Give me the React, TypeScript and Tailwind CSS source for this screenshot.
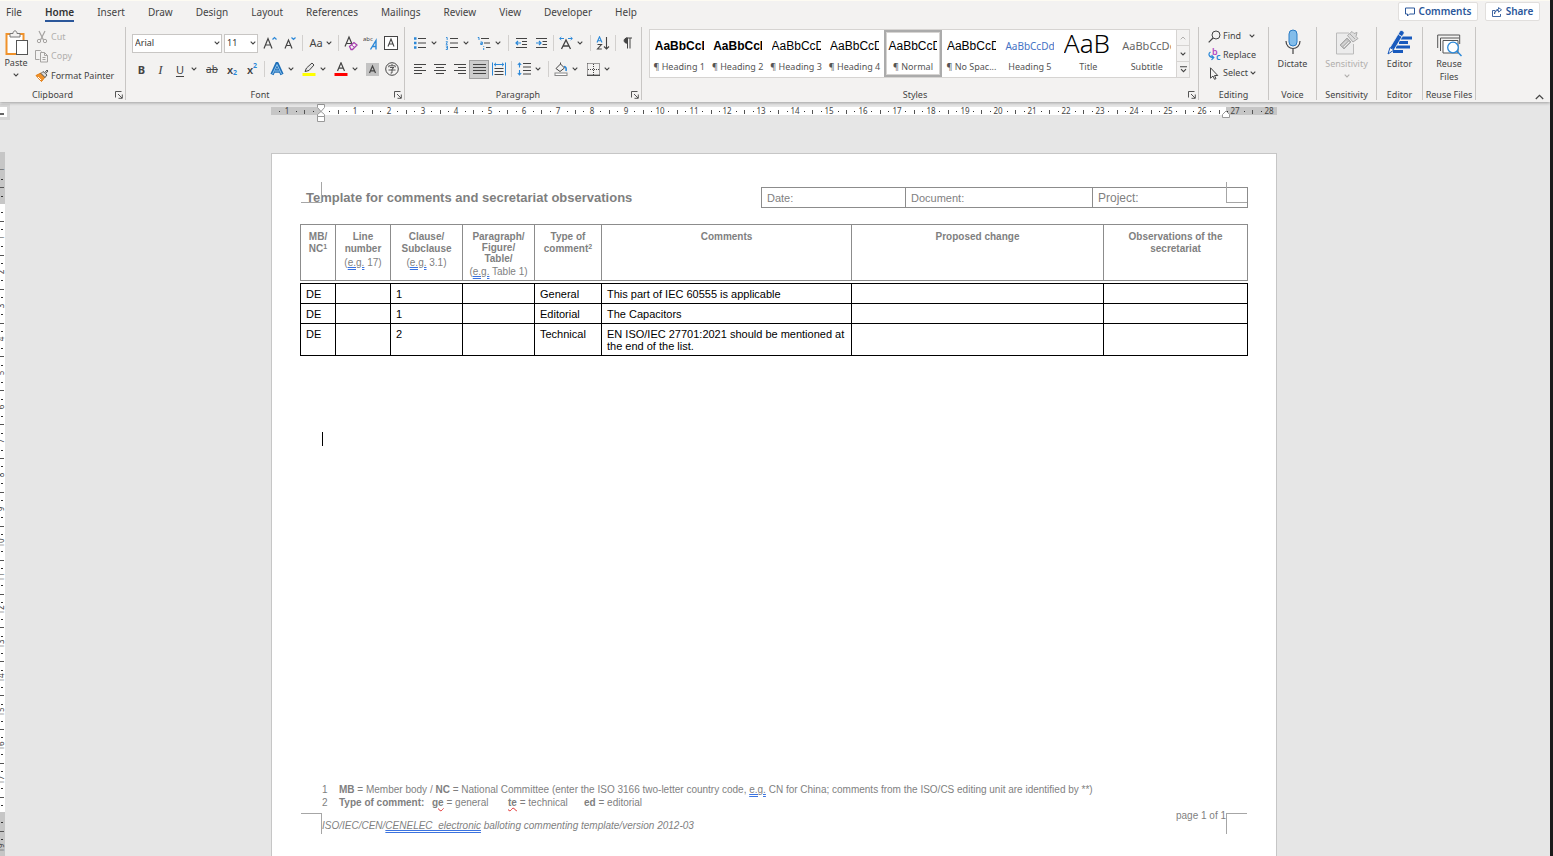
import React from "react";
import clsx from "clsx";

interface ChildrenProps {
  children?: React.ReactNode;
}

const BLUE = "#2b88d8";
const INK = "#444444";

const Icon = ({
  children,
  w = 16,
  h = 16,
}: ChildrenProps & { w?: number; h?: number }) => (
  <svg
    width={w}
    height={h}
    viewBox={`0 0 ${w} ${h}`}
    fill="none"
    stroke={INK}
    aria-hidden="true"
    className="shrink-0"
  >
    {children}
  </svg>
);

const Chevron = ({ color = INK }: { color?: string }) => (
  <Icon w={6} h={4}>
    <path d="M.7.7 3 3 5.3.7" stroke={color} strokeWidth="1.1" />
  </Icon>
);

/* ---------- small building blocks ---------- */

const Tool = ({
  label,
  children,
  active,
  narrow,
}: ChildrenProps & { label: string; active?: boolean; narrow?: boolean }) => (
  <button
    aria-label={label}
    className={clsx(
      "flex h-[19px] items-center justify-center",
      narrow ? "w-[19px]" : "w-5",
      active && "border border-[#a0a0a0] bg-[#cdcdcd]"
    )}
  >
    {children}
  </button>
);

const SplitTool = ({ label, children }: ChildrenProps & { label: string }) => (
  <div className="flex h-[19px] w-8 items-center">
    <button aria-label={label} className="flex w-5 justify-center">
      {children}
    </button>
    <button aria-label={`${label} options`} className="flex h-full w-2 items-center justify-center">
      <Chevron />
    </button>
  </div>
);

const Divider = () => <span className="mx-[2px] h-4 w-px bg-[#d2d0ce]" />;

const Launcher = ({ label }: { label: string }) => (
  <button aria-label={label} className="w-[10px]">
    <Icon w={8} h={8}>
      <path d="M.5 6.500V.5h6M3 3l4 4M7.300 3.500v3.800H3.500" strokeWidth=".9" />
    </Icon>
  </button>
);

const Group = ({
  title,
  className,
  launcher,
  children,
}: ChildrenProps & { title: string; className: string; launcher?: boolean }) => (
  <section
    aria-label={title}
    className={clsx("flex h-[73px] shrink-0 flex-col border-r border-[#c8c6c4]", className)}
  >
    <div className="flex-1">{children}</div>
    <div className="flex h-[10px] items-center leading-[10px]">
      <span className="flex-1 text-center whitespace-nowrap">{title}</span>
      {launcher && <Launcher label={`${title} settings`} />}
    </div>
  </section>
);

const Row = ({ children }: ChildrenProps) => <div className="flex h-[26px] items-center">{children}</div>;

const DropDown = ({
  label,
  options,
  className,
}: {
  label: string;
  options: string[];
  className: string;
}) => (
  <div className={clsx("relative h-[19px]", className)}>
    <select
      aria-label={label}
      className="h-full w-full appearance-none border border-[#c8c6c4] bg-white px-[2px] text-[9px] text-[#333]"
    >
      {options.map((o) => (
        <option key={o}>{o}</option>
      ))}
    </select>
    <span className="pointer-events-none absolute top-[7px] right-[2px]">
      <Chevron />
    </span>
  </div>
);

const BigButton = ({
  icon,
  children,
  disabled,
  arrow,
}: ChildrenProps & { icon: React.ReactNode; disabled?: boolean; arrow?: boolean }) => (
  <button
    disabled={disabled}
    className={clsx(
      "flex w-full flex-col items-center text-center leading-[13px]",
      disabled && "text-[#b1afad]"
    )}
  >
    <span className="flex h-[30px] items-center">{icon}</span>
    {children}
    {arrow && (
      <span className="mt-1">
        <Chevron color={disabled ? "#b1afad" : INK} />
      </span>
    )}
  </button>
);

/* ---------- ribbon ---------- */

const tabs = [
  "File",
  "Home",
  "Insert",
  "Draw",
  "Design",
  "Layout",
  "References",
  "Mailings",
  "Review",
  "View",
  "Developer",
  "Help",
];

const TabRow = () => (
  <div className="flex h-[26px] items-start justify-between pr-[10px] pl-[6px]">
    <nav className="flex gap-[23px] text-[10px]">
      {tabs.map((tab) => (
        <a
          key={tab}
          href={`#${tab.toLowerCase()}`}
          className={clsx(
            "flex h-[21px] items-center border-b-2 pt-[3px]",
            tab === "Home" ? "border-[#2b579a] font-semibold text-[#333]" : "border-transparent"
          )}
        >
          {tab}
        </a>
      ))}
    </nav>
    <div className="flex gap-[7px] pt-[1px] text-[10px] font-semibold text-[#2b579a]">
      <button className="flex h-[19px] w-[80px] items-center justify-center gap-1 rounded-[2px] border border-[#e1dfdd] bg-white">
        <Icon w={10} h={10}>
          <path d="M.5 1h9v6H4.500L2.500 9V7h-2z" stroke="#2b579a" />
        </Icon>
        Comments
      </button>
      <button className="flex h-[19px] w-[55px] items-center justify-center gap-1 rounded-[2px] border border-[#e1dfdd] bg-white">
        <Icon w={10} h={10}>
          <path d="M3 3.500H.5v6h8V7M2.500 7c.3-2.500 1.500-3.600 4-3.600V5.200L9.500 2.800 6.500.6v1.700C4 2.500 2.600 4.300 2.500 7z" stroke="#2b579a" strokeWidth=".9" />
        </Icon>
        Share
      </button>
    </div>
  </div>
);

const ClipboardGroup = () => (
  <Group title="Clipboard" className="w-[126px] [&>div:last-child>span]:pr-[10px]" launcher>
    <div className="flex">
      <button className="flex w-[32px] flex-col items-center pt-[3px] leading-[13px]">
        <Icon w={23} h={26}>
          <rect x="1.500" y="4" width="17" height="20" fill="#fff" stroke="#f0922b" strokeWidth="2" />
          <path d="M5 7V3.500h3C8 0 12 0 12 3.500h3V7z" fill="#f3f2f1" stroke="#777" />
          <rect x="11.500" y="10.500" width="11" height="14" fill="#fff" stroke="#555" />
        </Icon>
        <span>Paste</span>
        <span className="mt-1">
          <Chevron />
        </span>
      </button>
      <div className="flex flex-col pl-[3px]">
        <button disabled className="flex h-[19px] items-center gap-[2px] text-[#b1afad]">
          <Icon w={14} h={14}>
            <path d="M4 1l4.500 9M10 1 5.500 10" stroke="#a5a3a1" strokeWidth="1.200" />
            <circle cx="4" cy="11" r="1.700" stroke="#a5a3a1" />
            <circle cx="10" cy="11" r="1.700" stroke="#a5a3a1" />
          </Icon>
          Cut
        </button>
        <button disabled className="flex h-[20px] items-center gap-[2px] text-[#b1afad]">
          <Icon w={14} h={14}>
            <path d="M4.500 10.500h-4v-9h5l1 1M5.500 3.500h4l3 3v6.500h-7zM9.500 3.500v3h3M7.500 8.500h3M7.500 10.500h3" stroke="#a5a3a1" />
          </Icon>
          Copy
        </button>
        <button className="flex h-[19px] items-center gap-[2px] whitespace-nowrap">
          <Icon w={14} h={14}>
            <path d="M1 6.500 6 4l4 4-3.500 4.500z" fill="#f0922b" stroke="#e07b10" />
            <path d="M3 8l3 3" stroke="#fff" />
            <path d="M6 4.500 8 2.500l1.500 1.300L12 1l1 1-2.500 2.800L12 6l-2 2.500z" fill="#ddd" stroke="#444" strokeWidth=".9" />
          </Icon>
          Format Painter
        </button>
      </div>
    </div>
  </Group>
);

const glyph = "leading-none text-[#444]";

const FontGroup = () => (
  <Group title="Font" className="w-[279px]" launcher>
    <div className="pt-[3px] pl-[6px]">
      <Row>
        <DropDown label="Font" options={["Arial", "Calibri", "Times New Roman"]} className="mr-[2px] w-[90px]" />
        <DropDown label="Font size" options={["11", "12", "14"]} className="mr-[2px] w-[34px]" />
        <Tool label="Increase font size">
          <Icon>
            <path d="M2 13.500 6 3.500l4 10M3.300 10h5.400" strokeWidth="1.200" />
            <path d="M10.500 4.500l2-2 2 2" stroke={BLUE} strokeWidth="1.200" />
          </Icon>
        </Tool>
        <Tool label="Decrease font size">
          <Icon>
            <path d="M3 13.500 6.500 5l3.500 8.500M4.200 10.500h4.600" strokeWidth="1.200" />
            <path d="M9.500 2.500l2 2 2-2" stroke={BLUE} strokeWidth="1.200" />
          </Icon>
        </Tool>
        <Divider />
        <button aria-label="Change case" className="flex w-[31px] items-center justify-center gap-[3px] text-[11px]">
          Aa
          <Chevron />
        </button>
        <Divider />
        <Tool label="Clear formatting">
          <Icon>
            <path d="M2 11.500 6 2l3 7M3.400 8.500h5" strokeWidth="1.200" />
            <path d="M6.500 11.500 11 7.500l3 2.500-4.500 4.500H8z" fill="#f3f2f1" stroke="#a83fb0" strokeWidth="1.300" />
            <path d="M8.500 9.800l3 2.700" stroke="#a83fb0" />
          </Icon>
        </Tool>
        <Tool label="Phonetic guide">
          <Icon>
            <text x="0" y="6" fontSize="6" fill={INK} stroke="none">abc</text>
            <path d="M7.500 14.500 13 5.500v9M9.500 11.500H13" stroke={BLUE} strokeWidth="1.400" />
          </Icon>
        </Tool>
        <Tool label="Character border">
          <Icon w={14} h={14}>
            <rect x=".5" y=".5" width="13" height="13" fill="#fff" />
            <path d="M4 10.500 7 3l3 7.500M5 8h4" strokeWidth="1.100" />
          </Icon>
        </Tool>
      </Row>
      <Row>
        <Tool label="Bold" narrow>
          <b className={clsx(glyph, "text-[11px]")}>B</b>
        </Tool>
        <Tool label="Italic" narrow>
          <i className={clsx(glyph, "font-['Liberation_Serif',serif] text-[13px]")}>I</i>
        </Tool>
        <SplitTool label="Underline">
          <u className={clsx(glyph, "text-[11px] underline-offset-2")}>U</u>
        </SplitTool>
        <Tool label="Strikethrough">
          <s className={clsx(glyph, "text-[10px]")}>ab</s>
        </Tool>
        <Tool label="Subscript">
          <span className={clsx(glyph, "text-[11px] font-semibold")}>x</span>
          <span className="pt-[7px] text-[7px] leading-none font-bold text-[#2b88d8]">2</span>
        </Tool>
        <Tool label="Superscript">
          <span className={clsx(glyph, "text-[11px] font-semibold")}>x</span>
          <span className="pb-[8px] text-[7px] leading-none font-bold text-[#2b88d8]">2</span>
        </Tool>
        <Divider />
        <SplitTool label="Text effects">
          <Icon w={14} h={14}>
            <path d="M2 12.500 7 1.500l5 11M4 9h6" stroke="#1f6fb8" strokeWidth="3.400" strokeLinejoin="round" />
            <path d="M2.500 12 7 2.500l4.500 9.500M4.500 9h5" stroke="#8cc4f0" strokeWidth="1" />
          </Icon>
        </SplitTool>
        <SplitTool label="Highlight colour">
          <Icon w={14} h={14}>
            <path d="M3 9.500 4.500 6 10 1l2 2-5 5.500-4 1z" fill="#e8e8e8" />
            <rect y="11" x=".5" width="13" height="3" fill="#ffff00" stroke="none" />
          </Icon>
        </SplitTool>
        <SplitTool label="Font colour">
          <Icon w={14} h={14}>
            <path d="M3.500 9 7 .8 10.500 9M4.800 6.200h4.400" strokeWidth="1.200" />
            <rect y="11" x=".5" width="13" height="3" fill="#ff0000" stroke="none" />
          </Icon>
        </SplitTool>
        <Tool label="Character shading" narrow>
          <Icon w={13} h={13}>
            <rect width="13" height="13" fill="#c3c3c3" stroke="none" />
            <path d="M3.500 10 6.500 3l3 7M4.500 7.800h4" strokeWidth="1.200" />
          </Icon>
        </Tool>
        <Tool label="Enclose characters" narrow>
          <Icon w={14} h={14}>
            <circle cx="7" cy="7" r="6.300" />
            <path d="M7 2v1.500M3.800 5.300V3.800h6.400v1.500M5 5.500h4L7 7v4H5.600M3.500 8h7" strokeWidth=".9" />
          </Icon>
        </Tool>
      </Row>
    </div>
  </Group>
);

const alignIcon = (rows: [number, number][]) => (
  <Icon w={13} h={11}>
    {rows.map(([from, to], i) => (
      <path key={i} d={`M${from} ${i * 3 + 0.5}H${to}`} />
    ))}
  </Icon>
);

const ParagraphGroup = () => (
  <Group title="Paragraph" className="w-[237px]" launcher>
    <div className="pt-[3px] pl-[5px]">
      <Row>
        <SplitTool label="Bullets">
          <Icon w={14} h={14}>
            <path d="M5 2.500h8M5 7h8M5 11.500h8" />
            <path d="M1 2.500h2.500M1 7h2.500M1 11.500h2.500" stroke={BLUE} strokeWidth="2.500" />
          </Icon>
        </SplitTool>
        <SplitTool label="Numbering">
          <Icon w={14} h={14}>
            <path d="M5 2.500h8M5 7h8M5 11.500h8" />
            <path d="M1 1.500h1.200V4M.8 5.700h1.700L1 8.300h1.800M.8 10h1.700v3.500H.8M1 11.700h1.500" stroke={BLUE} strokeWidth=".9" />
          </Icon>
        </SplitTool>
        <SplitTool label="Multilevel list">
          <Icon w={14} h={14}>
            <path d="M4 2.500h8M7 7h6M9 11.500h4.500" />
            <path d="M.8 1.500H2V4M3.500 6h1.800v2.500H3.700V7.200h1.600M6.700 10v.8M6.700 12v2" stroke={BLUE} />
          </Icon>
        </SplitTool>
        <Divider />
        <Tool label="Decrease indent">
          <Icon w={13} h={12}>
            <path d="M1 1.500h11M7 4.500h5M7 7.500h5M1 10.500h11" />
            <path d="M6 6H1M3 4 1 6l2 2" stroke={BLUE} strokeWidth="1.200" />
          </Icon>
        </Tool>
        <Tool label="Increase indent">
          <Icon w={13} h={12}>
            <path d="M1 1.500h11M7.500 4.500H12M7.500 7.500H12M1 10.500h11" />
            <path d="M1 6h5M4 4l2 2-2 2" stroke={BLUE} strokeWidth="1.200" />
          </Icon>
        </Tool>
        <Divider />
        <SplitTool label="Asian layout">
          <Icon w={14} h={14}>
            <path d="M2.500 13 7 4l4.500 9M4.200 10h5.600" strokeWidth="1.300" />
            <path d="M.7 2.500H5M2.300 1 .7 2.500 2.300 4M13.300 2.500H9M11.700 1l1.600 1.500L11.700 4" stroke={BLUE} />
          </Icon>
        </SplitTool>
        <Divider />
        <Tool label="Sort">
          <Icon w={14} h={14}>
            <path d="M1 6.500 3.500.8 6 6.500M2 4.700h3" stroke={BLUE} strokeWidth="1.100" />
            <path d="M1.500 8.500h4L1.500 13h4.300M10.500 1v12M8 10.500l2.500 2.500 2.500-2.500" strokeWidth="1.100" />
          </Icon>
        </Tool>
        <Divider />
        <Tool label="Show formatting marks">
          <Icon w={12} h={12}>
            <path d="M5.500 11.500V1M8 11.500V1M4 1h6" />
            <path d="M5.500 1C1 .8 1 6.500 5.500 6.200z" fill={INK} />
          </Icon>
        </Tool>
      </Row>
      <Row>
        <Tool label="Align left">{alignIcon([[0, 12], [0, 8], [0, 12], [0, 8]])}</Tool>
        <Tool label="Centre">{alignIcon([[0, 12], [2, 10], [0, 12], [2, 10]])}</Tool>
        <Tool label="Align right" narrow>
          {alignIcon([[1, 13], [5, 13], [1, 13], [5, 13]])}
        </Tool>
        <Tool label="Justify" active>
          {alignIcon([[0, 13], [0, 13], [0, 13], [0, 13]])}
        </Tool>
        <Tool label="Distributed">
          <Icon w={14} h={14}>
            <path d="M.5.5v13M13.500.5v13M2 2.500h10M4 .8 2.200 2.500 4 4.200M10 .8l1.800 1.700L10 4.200" stroke={BLUE} />
            <path d="M2.500 6.500h9M2.500 9.500h9M2.500 12.500h9" />
          </Icon>
        </Tool>
        <Divider />
        <SplitTool label="Line spacing">
          <Icon w={14} h={14}>
            <path d="M6 1.500h8M6 5h8M6 8.500h8M6 12h8" />
            <path d="M2.500 1v4.500M.8 3l1.700-2 1.700 2M2.500 8v5M.8 11l1.700 2 1.700-2" stroke={BLUE} strokeWidth="1.100" />
          </Icon>
        </SplitTool>
        <Divider />
        <SplitTool label="Shading">
          <Icon w={14} h={14}>
            <path d="M2 6.500 6.500 2l4 4L6 9.500zM6.500 2V.5" />
            <path d="M10 4.500c2 0 2.500 2 2 4.500" stroke={BLUE} strokeWidth="1.600" />
            <rect x="1" y="11" width="12" height="2.500" fill="#fff" stroke="#888" />
          </Icon>
        </SplitTool>
        <SplitTool label="Borders">
          <Icon w={13} h={13}>
            <path d="M.5.5h12v11M.5.5v11M6.500 1v11M1 6.500h11" strokeDasharray="1 1" />
            <path d="M0 12.300h13" strokeWidth="1.300" />
          </Icon>
        </SplitTool>
      </Row>
    </div>
  </Group>
);

const styleItems = [
  { name: "¶ Heading 1", sample: "AaBbCcDd", look: "font-['Liberation_Sans',sans-serif] text-[12px] font-bold text-black" },
  { name: "¶ Heading 2", sample: "AaBbCcDd", look: "font-['Liberation_Sans',sans-serif] text-[12px] font-bold text-black" },
  { name: "¶ Heading 3", sample: "AaBbCcDd", look: "font-['Liberation_Sans',sans-serif] text-[12px] text-black" },
  { name: "¶ Heading 4", sample: "AaBbCcDd", look: "font-['Liberation_Sans',sans-serif] text-[12px] text-black" },
  { name: "¶ Normal", sample: "AaBbCcDd", look: "font-['Liberation_Sans',sans-serif] text-[12px] text-black" },
  { name: "¶ No Spac...", sample: "AaBbCcDd", look: "font-['Liberation_Sans',sans-serif] text-[12px] text-black" },
  { name: "Heading 5", sample: "AaBbCcDd", look: "text-[10px] text-[#4472c4]" },
  { name: "Title", sample: "AaB", look: "pb-[6px] text-[26px] font-light text-black" },
  { name: "Subtitle", sample: "AaBbCcDd", look: "text-[11px] text-[#666]" },
];

const StylesGroup = () => (
  <Group title="Styles" className="w-[557px]" launcher>
    <div className="mt-[2px] ml-[7px] flex h-[49px] w-[541px] border border-[#d6d4d2] bg-white">
      <div className="grid flex-1 grid-cols-9">
        {styleItems.map((item) => (
          <button
            key={item.name}
            className={clsx(
              "flex flex-col items-center overflow-hidden border-2",
              item.name === "¶ Normal" ? "border-[#ababab] ring-1 ring-[#d6d4d2] ring-inset" : "border-transparent"
            )}
          >
            <span
              className={clsx(
                "mt-[3px] flex h-[22px] w-[49px] items-center overflow-hidden whitespace-nowrap",
                item.look
              )}
            >
              {item.sample}
            </span>
            <span className="mt-[3px] leading-[14px] whitespace-nowrap text-[#555]">{item.name}</span>
          </button>
        ))}
      </div>
      <div className="flex w-[13px] flex-col divide-y divide-[#d6d4d2] border-l border-[#d6d4d2] bg-[#f3f2f1]">
        <button aria-label="Previous styles" className="flex flex-1 items-center justify-center">
          <Icon w={6} h={4}>
            <path d="M.7 3.300 3 1l2.300 2.300" stroke="#b1afad" />
          </Icon>
        </button>
        <button aria-label="Next styles" className="flex flex-1 items-center justify-center">
          <Chevron />
        </button>
        <button aria-label="All styles" className="flex flex-1 items-center justify-center">
          <Icon w={7} h={7}>
            <path d="M0 .8h7M1 3.200 3.500 5.700 6 3.200" strokeWidth="1.100" />
          </Icon>
        </button>
      </div>
    </div>
  </Group>
);

const EditingGroup = () => (
  <Group title="Editing" className="w-[70px]">
    <div className="flex flex-col pl-[9px]">
      <button className="flex h-[18px] items-center gap-[2px]">
        <Icon w={13} h={13}>
          <circle cx="8" cy="5" r="4" />
          <path d="M5 8 .7 12.300" strokeWidth="1.200" />
        </Icon>
        Find
        <span className="pl-[6px]">
          <Chevron />
        </span>
      </button>
      <button className="flex h-[19px] items-center gap-[2px]">
        <Icon w={13} h={13}>
          <text x="4" y="7" fontSize="9" fontWeight="600" fill="#b146c2" stroke="none">b</text>
          <text x="8" y="12" fontSize="9" fontWeight="600" fill={BLUE} stroke="none">c</text>
          <path d="M2.500 4C0 5.500.5 9.500 5.500 9.500M3.500 7.300l2.300 2.200-2.300 2.300" stroke={BLUE} strokeWidth="1.200" />
        </Icon>
        Replace
      </button>
      <button className="flex h-[18px] items-center gap-[2px]">
        <Icon w={13} h={13}>
          <path d="M2.500.8v10.400L5 9l1.500 3.300 1.500-.7L6.500 8.500h3.300z" />
        </Icon>
        Select
        <Chevron />
      </button>
    </div>
  </Group>
);

const Ribbon = () => (
  <header className="relative border-t border-[#fdfbf2] bg-[#f3f2f1] pb-[2px] text-[9px] text-[#444] shadow-[0_1px_3px_rgba(0,0,0,0.3)]">
    <TabRow />
    <div className="flex">
      <ClipboardGroup />
      <FontGroup />
      <ParagraphGroup />
      <StylesGroup />
      <EditingGroup />
      <Group title="Voice" className="w-[48px]">
        <BigButton
          icon={
            <Icon w={16} h={26}>
              <rect x="4" y="1" width="8" height="16" rx="4" fill="#83bdea" stroke="#2b7cc4" />
              <path d="M1 12c0 10 14 10 14 0M8 20v5" strokeWidth="1.200" />
            </Icon>
          }
        >
          Dictate
        </BigButton>
      </Group>
      <Group title="Sensitivity" className="w-[60px]">
        <BigButton
          disabled
          arrow
          icon={
            <Icon w={24} h={25}>
              <path d="M14 3H1.500v21h17V14" stroke="#bbb" fill="#ececec" />
              <path d="M5 15l7-7 4 4-7 7z" fill="#bbb" stroke="#aaa" />
              <path d="M7 15.500l5-5M9 17l5-5" stroke="#eee" />
              <path d="M12.500 5.500 17 1.500l2 2 3-1-1 4 2 2-5 3.500z" fill="#ddd" stroke="#aaa" />
              <path d="M15 4l5 5" stroke="#aaa" />
            </Icon>
          }
        >
          Sensitivity
        </BigButton>
      </Group>
      <Group title="Editor" className="w-[46px]">
        <BigButton
          icon={
            <Icon w={26} h={26}>
              <path d="M14 9h11M12 13.500h9M9 18h14M6 22.500h10" stroke="#185abd" strokeWidth="2.800" />
              <path d="M3 18.500 13 2c1-1.600 5 .6 4 2.400L7 21z" fill="#185abd" stroke="#f3f2f1" strokeWidth=".8" />
              <path d="M1 25l2-6.500L7 21z" fill="#f3f2f1" stroke="#185abd" />
              <path d="M11.500 5.500l3.800 2.300" stroke="#f3f2f1" />
            </Icon>
          }
        >
          Editor
        </BigButton>
      </Group>
      <Group title="Reuse Files" className="w-[53px]">
        <BigButton
          icon={
            <span className="pt-[6px]">
              <Icon w={25} h={23}>
                <path d="M.7 14V1h22v9M3.500 17V4h18.500" stroke="#555" />
                <path d="M6 19V6.500h15V19z" fill="#fff" stroke="#555" />
                <circle cx="16" cy="13.500" r="5.300" fill="#fff" stroke={BLUE} strokeWidth="1.300" />
                <path d="M20 17.300l4.500 4.700" stroke={BLUE} strokeWidth="1.500" />
              </Icon>
            </span>
          }
        >
          Reuse
          <br />
          Files
        </BigButton>
      </Group>
      <div className="flex flex-1 items-end justify-end pr-[6px]">
        <button aria-label="Collapse the ribbon">
          <Icon w={9} h={6}>
            <path d="M.8 5 4.500 1.300 8.200 5" strokeWidth="1.200" />
          </Icon>
        </button>
      </div>
    </div>
  </header>
);

/* ---------- rulers ---------- */

const CM = 33.87; // one centimetre at the current zoom

const quarters = (first: number, last: number) =>
  Array.from({ length: (last - first) * 4 + 1 }, (_, i) => first + i / 4);

const HorizontalRuler = () => {
  const at = (cm: number) => Math.round(50 + cm * CM);
  return (
    <svg width="1006" height="20" className="shrink-0" aria-label="Horizontal ruler">
      <rect y="5" width="1006" height="8" fill="#c6c6c6" />
      <rect x="50" y="5" width="905" height="8" fill="#fff" />
      {quarters(-1.5, 28).map((q) => {
        if (q === 0) return null;
        if (q % 1 === 0)
          return (
            <text key={q} x={at(q)} y="12" fontSize="8" textAnchor="middle" fill="#444">
              {Math.abs(q)}
            </text>
          );
        return q % 0.5 === 0 ? (
          <rect key={q} x={at(q)} y="8" width="1" height="4" fill="#555" />
        ) : (
          <rect key={q} x={at(q)} y="9" width="1" height="1" fill="#333" />
        );
      })}
      <path d="M46.500 2.500h7v3l-3.500 4 3.500 3v2h-7v-2l3.500-3-3.500-4zM46.500 14.500h7v5h-7z" fill="#fff" stroke="#999" />
      <path d="M951.500 15.500v-3l3.500-3.500 3.500 3.500v3z" fill="#fff" stroke="#999" />
    </svg>
  );
};

const VerticalRuler = () => {
  const at = (cm: number) => Math.round(52 + cm * CM);
  return (
    <svg width="5" height="704" className="shrink-0" aria-label="Vertical ruler">
      <rect width="5" height="704" fill="#c6c6c6" />
      <rect y="52" width="5" height="608" fill="#fff" />
      {quarters(-1, 19).map((q) => {
        if (q === 0 || q === 18) return null;
        if (q % 1 === 0)
          return (
            <text
              key={q}
              transform={`translate(4 ${at(q)}) rotate(-90)`}
              fontSize="8"
              textAnchor="middle"
              fill="#444"
            >
              {Math.abs(q)}
            </text>
          );
        return q % 0.5 === 0 ? (
          <rect key={q} y={at(q)} width="4" height="1" fill="#555" />
        ) : (
          <rect key={q} x="1" y={at(q)} width="2" height="1" fill="#333" />
        );
      })}
    </svg>
  );
};

/* ---------- document ---------- */

const Eg = () => <span className="underline decoration-[#3b73e0] decoration-double">e.g.</span>;

const columns = [
  { width: "w-[36px]", head: <>MB/<br />NC<sup className="text-[7px] leading-none">1</sup></> },
  { width: "w-[55px]", head: <>Line<br />number</>, hint: <>(<Eg /> 17)</> },
  { width: "w-[72px]", head: <>Clause/<br />Subclause</>, hint: <>(<Eg /> 3.1)</> },
  {
    width: "w-[72px] leading-[11px]",
    head: <>Paragraph/<br />Figure/<br />Table/</>,
    hint: <>(<Eg /> Table 1)</>,
  },
  { width: "w-[67px]", head: <>Type of<br />comment<sup className="text-[7px] leading-none">2</sup></> },
  { width: "w-[250px]", head: <>Comments</> },
  { width: "w-[252px]", head: <>Proposed change</> },
  { width: "w-[144px]", head: <>Observations of the<br />secretariat</> },
];

const comments = [
  ["DE", "", "1", "", "General", "This part of IEC 60555 is applicable", "", ""],
  ["DE", "", "1", "", "Editorial", "The Capacitors", "", ""],
  ["DE", "", "2", "", "Technical", "EN ISO/IEC 27701:2021 should be mentioned at the end of the list.", "", ""],
];

const CommentsTable = () => (
  <table className="mt-4 w-full table-fixed border-separate border-spacing-0">
    <thead>
      <tr className="h-[57px] text-[10px] leading-3 text-[#7f7f7f]">
        {columns.map((col, i) => (
          <th
            key={i}
            scope="col"
            className={clsx(
              "border-t border-r border-b border-[#8c8c8c] p-0 pt-[6px] align-top whitespace-nowrap first:border-l",
              col.width
            )}
          >
            {col.head}
            {col.hint && <div className="mt-[2px] font-normal">{col.hint}</div>}
          </th>
        ))}
      </tr>
    </thead>
    <tbody className="text-[11px] leading-3 text-black">
      <tr aria-hidden="true">
        <td colSpan={8} className="h-[3px] border-b border-black p-0" />
      </tr>
      {comments.map((row, r) => (
        <tr key={r}>
          {row.map((cell, c) => (
            <td
              key={c}
              className="border-r border-b border-black pt-1 pr-1 pb-[3px] pl-[5px] align-top first:border-l"
            >
              {cell}
            </td>
          ))}
        </tr>
      ))}
    </tbody>
  </table>
);

const CropMarks = () => (
  <div aria-hidden="true" className="[&>span]:absolute [&>span]:size-[21px] [&>span]:border-[#a6a6a6]">
    <span className="top-7 left-[29px] border-r border-b" />
    <span className="top-7 right-[29px] border-b border-l" />
    <span className="bottom-[22px] left-[29px] border-t border-r" />
    <span className="right-[29px] bottom-[22px] border-t border-l" />
  </div>
);

const Page = () => (
  <article className="relative mt-[31px] flex w-[1006px] flex-col border border-b-0 border-[#c6c6c6] bg-white px-7 pt-[33px] font-['Liberation_Sans',Arial,sans-serif] text-[#7f7f7f]">
    <CropMarks />
    <div className="flex h-[21px] items-center justify-between pl-[6px]">
      <h1 className="text-[13px] font-bold">Template for comments and secretariat observations</h1>
      <table className="h-[21px] w-[487px] table-fixed border-collapse text-[11px] leading-3">
        <tbody>
          <tr>
            <td className="w-[144px] border border-[#8c8c8c] px-[5px]">Date:</td>
            <td className="w-[187px] border border-[#8c8c8c] px-[5px]">Document:</td>
            <td className="border border-[#8c8c8c] px-[5px] text-[12px]">Project:</td>
          </tr>
        </tbody>
      </table>
    </div>
    <CommentsTable />
    <div className="mt-[76px] ml-[22px] h-[14px] w-px bg-black" />
    <footer className="mt-auto px-[22px] pb-[24px] text-[10px] leading-[13px]">
      <div className="flex">
        <span className="w-[17px]">1</span>
        <p>
          <b>MB</b> = Member body / <b>NC</b> = National Committee (enter the ISO 3166 two-letter country
          code, <Eg /> CN for China; comments from the ISO/CS editing unit are identified by **)
        </p>
      </div>
      <div className="flex">
        <span className="w-[17px]">2</span>
        <b className="w-[93px]">Type of comment:</b>
        <span className="w-[76px]">
          <b className="underline decoration-[#e03030] decoration-wavy decoration-1">ge</b> = general
        </span>
        <span className="w-[76px]">
          <b className="underline decoration-[#e03030] decoration-wavy decoration-1">te</b> = technical
        </span>
        <span>
          <b>ed</b> = editorial
        </span>
      </div>
      <div className="flex justify-between">
        <p className="pt-[10px] italic">
          ISO/IEC/CEN/
          <span className="underline decoration-[#3b73e0] decoration-double">CENELEC&nbsp; electronic</span>{" "}
          balloting commenting template/version 2012-03
        </p>
        <p>page 1 of 1</p>
      </div>
    </footer>
  </article>
);

const App = () => (
  <div className="flex min-h-screen bg-[#1b1b1b] pr-[3px] font-['Noto_Sans',sans-serif]">
    <div className="flex min-w-0 flex-1 flex-col overflow-hidden bg-[#e6e6e6]">
      <Ribbon />
      <div className="flex h-5">
        <div className="mt-[2px] flex h-4 w-[10px] items-end border-[3px] border-l-0 border-[#d6d6d6] bg-white pb-[2px]">
          <span className="h-[2px] w-[4px] bg-[#666]" />
        </div>
        <div className="flex flex-1 justify-center pr-[12px]">
          <HorizontalRuler />
        </div>
      </div>
      <main className="flex flex-1">
        <div className="pt-[30px]">
          <VerticalRuler />
        </div>
        <div className="flex flex-1 justify-center pr-[7px]">
          <Page />
        </div>
      </main>
    </div>
  </div>
);

export default App;
